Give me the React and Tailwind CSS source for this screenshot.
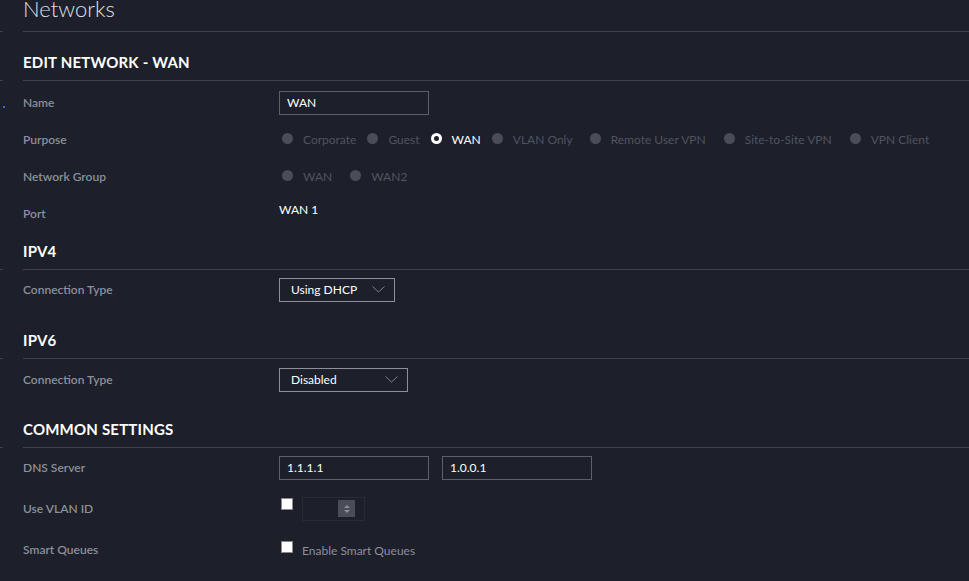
import React from "react";

const Rule = () => (
  <div className="flex h-px w-full">
    <div className="w-[3px] bg-[#3c414c]" />
    <div className="w-[20px]" />
    <div className="flex-1 bg-[#3c414c]" />
  </div>
);

const Heading = ({ children, pt }) => (
  <div className={`pl-[23px] ${pt} pb-[8px] text-[15px] leading-[20px] font-bold text-white tracking-[0.2px]`}>
    {children}
  </div>
);

const Row = ({ label, h = "h-[37px]", children }) => (
  <div className={`flex items-center ${h} pl-[23px]`}>
    <div className="w-[256px] shrink-0 text-[12px] font-semibold text-[#8b9099]">{label}</div>
    <div className="flex items-center">{children}</div>
  </div>
);

const Radio = ({ label, checked, mr = "mr-[11px]" }) => (
  <div className={`flex items-center ${mr}`}>
    {checked ? (
      <span className="w-[11px] h-[11px] rounded-full border-[3px] border-white bg-[#1d1f2b] mb-[3px]" />
    ) : (
      <span className="w-[11px] h-[11px] rounded-full bg-[#4a4d58] mb-[3px]" />
    )}
    <span className={`ml-[10px] text-[12px] ${checked ? "text-white" : "text-[#50545e]"}`}>{label}</span>
  </div>
);

const TextBox = ({ value, w = "w-[150px]" }) => (
  <div className={`${w} h-[24px] border border-[#5d6069] flex items-center pl-[7px] text-[12px] text-white`}>
    {value}
  </div>
);

const Chevron = () => (
  <svg width="13" height="7" viewBox="0 0 13 7" fill="none">
    <path d="M0.5 0.5 L6.5 6 L12.5 0.5" stroke="#80848c" strokeWidth="1" />
  </svg>
);

const Select = ({ value, w }) => (
  <div className={`${w} h-[24px] border border-[#8e9097] flex items-center justify-between pl-[11px] pr-[9px] text-[12px] text-white`}>
    <span>{value}</span>
    <Chevron />
  </div>
);

const Check = ({ className = "" }) => (
  <span className={`block w-[12px] h-[12px] bg-white border border-[#8a8a8a] ${className}`} />
);

export default function App() {
  return (
    <div className="relative min-h-[581px] bg-[#1d1f2b] font-['Lato','Noto_Sans',sans-serif] overflow-hidden">
      <span className="absolute left-[3px] top-[106px] w-[2px] h-[2px] bg-[#2f6fd6]" />

      <div className="h-[31px] pl-[23px] text-[22px] leading-[18px] font-light text-[#dde1e6]">Networks</div>
      <Rule />

      <Heading pt="pt-[20px]">EDIT NETWORK - WAN</Heading>
      <Rule />
      <div className="mt-[3px]">
        <Row label="Name">
          <TextBox value="WAN" />
        </Row>
        <Row label="Purpose">
          <div className="flex items-center ml-[3px]">
            <Radio label="Corporate" />
            <Radio label="Guest" />
            <Radio label="WAN" checked />
            <Radio label="VLAN Only" mr="mr-[17px]" />
            <Radio label="Remote User VPN" mr="mr-[18px]" />
            <Radio label="Site-to-Site VPN" mr="mr-[18px]" />
            <Radio label="VPN Client" />
          </div>
        </Row>
        <Row label="Network Group">
          <div className="flex items-center ml-[3px]">
            <Radio label="WAN" mr="mr-[18px]" />
            <Radio label="WAN2" />
          </div>
        </Row>
        <Row label="Port">
          <span className="text-[12px] text-white mb-[7px]">WAN 1</span>
        </Row>
      </div>

      <Heading pt="pt-[9px]">IPV4</Heading>
      <Rule />
      <div className="mt-[1px]">
        <Row label="Connection Type">
          <Select value="Using DHCP" w="w-[116px]" />
        </Row>
      </div>

      <Heading pt="pt-[22px]">IPV6</Heading>
      <Rule />
      <div className="mt-[2px]">
        <Row label="Connection Type">
          <Select value="Disabled" w="w-[129px]" />
        </Row>
      </div>

      <Heading pt="pt-[21px]">COMMON SETTINGS</Heading>
      <Rule />
      <div>
        <Row label="DNS Server" h="h-[40px]">
          <div className="flex gap-[13px]">
            <TextBox value="1.1.1.1" />
            <TextBox value="1.0.0.1" />
          </div>
        </Row>
        <Row label="Use VLAN ID" h="h-[41px]">
          <Check className="ml-[2px] mb-[9px]" />
          <div className="ml-[9px] w-[63px] h-[24px] border border-[#282a37] flex items-center justify-end pr-[9px]">
            <div className="w-[17px] h-[17px] bg-[#4a4c57] flex flex-col items-center justify-center gap-[2px]">
              <span className="w-0 h-0 border-l-[3px] border-r-[3px] border-b-[3px] border-l-transparent border-r-transparent border-b-[#8b8d96]" />
              <span className="w-0 h-0 border-l-[3px] border-r-[3px] border-t-[3px] border-l-transparent border-r-transparent border-t-[#8b8d96]" />
            </div>
          </div>
        </Row>
        <Row label="Smart Queues" h="h-[41px]">
          <Check className="ml-[2px] mb-[6px]" />
          <span className="ml-[9px] mt-[3px] text-[12px] text-[#8b9099]">Enable Smart Queues</span>
        </Row>
      </div>
    </div>
  );
}
